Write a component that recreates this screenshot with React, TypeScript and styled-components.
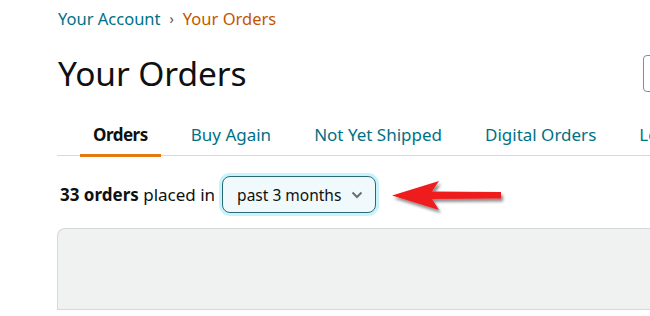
import styled, { createGlobalStyle } from "styled-components";

const GlobalStyle = createGlobalStyle`
  html, body {
    margin: 0;
    background: #fff;
    overflow: hidden;
  }
  body {
    font-family: "Noto Sans", "Liberation Sans", sans-serif;
    color: #0f1111;
  }
`;

const tabs = [
  "Orders",
  "Buy Again",
  "Not Yet Shipped",
  "Digital Orders",
  "Local Store Orders",
  "Amazon Pay",
];

export default function App() {
  return (
    <>
      <GlobalStyle />
      <Page>
        <Breadcrumb>
          <Crumb>Your Account</Crumb>
          <Sep>›</Sep>
          <Crumb current>Your Orders</Crumb>
        </Breadcrumb>
        <Header>
          <Title>Your Orders</Title>
          <Search placeholder="Search all orders" />
        </Header>
        <Tabs>
          {tabs.map((t, i) => (
            <Tab key={t} active={i === 0}>
              {t}
            </Tab>
          ))}
        </Tabs>
        <FilterRow>
          <Count>
            <b>33 orders</b> placed in
          </Count>
          <Select>
            past 3 months
            <Chevron viewBox="0 0 12 8">
              <path d="M1.5 1.5 L6 6 L10.5 1.5" />
            </Chevron>
          </Select>
          <Arrow viewBox="0 0 120 40">
            <defs>
              <filter id="sh" x="-10%" y="-30%" width="130%" height="180%">
                <feGaussianBlur in="SourceAlpha" stdDeviation="1.6" />
                <feOffset dx="2" dy="3" />
                <feComponentTransfer>
                  <feFuncA type="linear" slope="0.45" />
                </feComponentTransfer>
                <feMerge>
                  <feMergeNode />
                  <feMergeNode in="SourceGraphic" />
                </feMerge>
              </filter>
            </defs>
            <path
              filter="url(#sh)"
              fill="#ee1c1c"
              d="M3 19.5 L50 5 L43 15.5 L112 16 L112 22.5 L43 23 L50 34 Z"
            />
          </Arrow>
        </FilterRow>
        <OrderCard />
      </Page>
    </>
  );
}

const Page = styled.div`
  width: 885px;
  padding: 7px 0 0 58px;
`;

const Breadcrumb = styled.nav`
  display: flex;
  align-items: center;
  gap: 9px;
  font-size: 16.5px;
  line-height: 24px;
`;

const Crumb = styled.span<{ current?: boolean }>`
  color: ${(p) => (p.current ? "#c45500" : "#007185")};
`;

const Sep = styled.span`
  color: #555;
  font-size: 14px;
`;

const Header = styled.div`
  display: flex;
  align-items: center;
  justify-content: space-between;
  margin-top: 22px;
`;

const Title = styled.h1`
  margin: 0;
  font-size: 33.5px;
  font-weight: 400;
  line-height: 40px;
  letter-spacing: -0.1px;
`;

const Search = styled.input`
  width: 300px;
  height: 37px;
  box-sizing: border-box;
  border: 1px solid #888c8c;
  border-radius: 4px;
  padding: 0 10px;
  font: inherit;
  font-size: 14px;
  &::placeholder {
    color: transparent;
  }
`;

const Tabs = styled.ul`
  display: flex;
  gap: 17px;
  list-style: none;
  margin: 29px 0 0 -1px;
  padding: 0 0 0 23px;
  border-bottom: 1px solid #d5d9d9;
`;

const Tab = styled.li<{ active?: boolean }>`
  padding: 0 13px 7px;
  font-size: 17px;
  line-height: 25px;
  white-space: nowrap;
  color: ${(p) => (p.active ? "#0f1111" : "#007185")};
  font-weight: ${(p) => (p.active ? 700 : 400)};
  letter-spacing: ${(p) => (p.active ? "-0.5px" : "0")};
  border-bottom: 3px solid ${(p) => (p.active ? "#e47911" : "transparent")};
  margin-bottom: -2px;
`;

const FilterRow = styled.div`
  position: relative;
  display: flex;
  align-items: center;
  gap: 7px;
  margin-top: 20px;
  font-size: 17px;
`;

const Count = styled.span`
  padding-left: 2px;
  b {
    font-weight: 700;
  }
`;

const Select = styled.div`
  display: flex;
  align-items: center;
  gap: 10px;
  height: 37px;
  box-sizing: border-box;
  padding: 0 12px 0 14px;
  border: 1px solid #2d6a78;
  border-radius: 8px;
  background: #f0f9fb;
  box-shadow: 0 0 0 3px #c8f3fa;
  font-size: 15.5px;
`;

const Chevron = styled.svg`
  width: 12px;
  height: 8px;
  fill: none;
  stroke: #6b7070;
  stroke-width: 2;
`;

const Arrow = styled.svg`
  position: absolute;
  left: 331px;
  top: 0px;
  width: 120px;
  height: 40px;
`;

const OrderCard = styled.div`
  margin: 15px 0 0 -1px;
  height: 80px;
  background: #f0f2f2;
  border: 1px solid #d5d9d9;
  border-right: none;
  border-radius: 8px 0 0 0;
`;
